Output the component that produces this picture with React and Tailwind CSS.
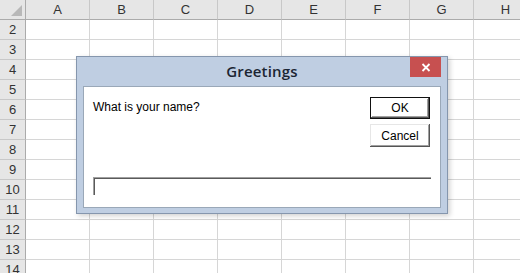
import React from "react";

const COLS = ["A", "B", "C", "D", "E", "F", "G", "H"];
const ROWS = [2, 3, 4, 5, 6, 7, 8, 9, 10, 11, 12, 13, 14];

const Sheet = () => (
  <div className="grid grid-cols-[26px_64px_64px_64px_64px_64px_64px_64px_64px] auto-rows-[20px]">
    <div className="relative bg-[#e6e6e6] border-r border-b border-[#ababab]">
      <div className="absolute right-[3px] bottom-[3px] w-0 h-0 border-l-[11px] border-l-transparent border-b-[11px] border-b-[#b8b8b8]" />
    </div>
    {COLS.map((c) => (
      <div
        key={c}
        className="bg-[#e6e6e6] border-r border-[#c8c8c8] border-b border-b-[#ababab] flex items-center justify-center text-[13px] text-[#333]"
      >
        {c}
      </div>
    ))}
    {ROWS.map((r) => (
      <React.Fragment key={r}>
        <div className="bg-[#e6e6e6] border-r border-[#ababab] border-b border-b-[#c8c8c8] flex items-center justify-center text-[13px] text-[#333]">
          {r}
        </div>
        {COLS.map((c) => (
          <div key={c} className="bg-white border-r border-b border-[#d6d6d6]" />
        ))}
      </React.Fragment>
    ))}
  </div>
);

const InputDialog = () => (
  <div className="absolute left-[76px] top-[56px] w-[372px] h-[158px] bg-[#bfcee2] border border-[#8596ad] shadow-[2px_2px_5px_rgba(0,0,0,0.18)] flex flex-col px-[6px] pb-[5px]">
    <div className="relative h-[29px] flex items-center justify-center">
      <span className="text-[15px] font-semibold text-[#1b2533] font-['Open_Sans',sans-serif] tracking-[0.2px]">
        Greetings
      </span>
      <button className="absolute right-0 top-0 w-[31px] h-[20px] bg-[#c75050] flex items-center justify-center">
        <svg width="10" height="9" viewBox="0 0 10 9">
          <path d="M1.5 1 L8.5 8 M8.5 1 L1.5 8" stroke="white" strokeWidth="1.8" />
        </svg>
      </button>
    </div>
    <div className="flex-1 bg-white border border-[#9aa8b8] flex flex-col px-[9px] pt-[10px] font-['Liberation_Sans',Arial,sans-serif]">
      <div className="flex justify-between">
        <p className="text-[12px] text-black pt-[1px]">What is your name?</p>
        <div className="flex flex-col gap-[5px] mr-[1px]">
          <button className="w-[60px] h-[22px] text-[12px] text-black bg-white border border-[#111] shadow-[inset_-1px_-1px_#555,inset_1px_1px_#fff,inset_-2px_-2px_#a0a0a0]">
            OK
          </button>
          <button className="w-[60px] h-[23px] text-[12px] text-black bg-white shadow-[inset_-1px_-1px_#555,inset_1px_1px_#e6e6e6,inset_-2px_-2px_#a0a0a0]">
            Cancel
          </button>
        </div>
      </div>
      <div className="mt-[30px] w-[338px] h-[18px] border-t border-l border-[#a0a0a0] shadow-[inset_1px_1px_#5a5a5a]" />
    </div>
  </div>
);

export default function App() {
  return (
    <div className="relative w-[520px] h-[273px] overflow-hidden bg-white font-['Liberation_Sans',Arial,sans-serif]">
      <Sheet />
      <InputDialog />
    </div>
  );
}
